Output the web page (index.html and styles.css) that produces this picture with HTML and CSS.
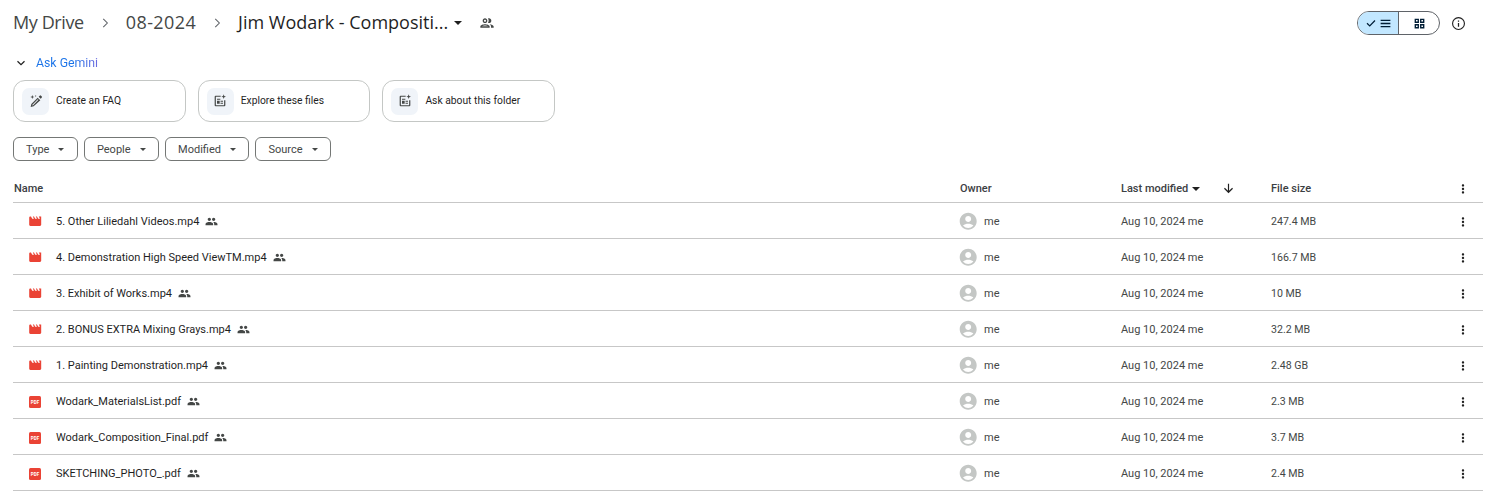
FILE: index.html
```html
<!DOCTYPE html>
<html lang="en">
<head>
<meta charset="utf-8">
<title>Jim Wodark - Composition - Google Drive</title>
<link rel="stylesheet" href="styles.css">
</head>
<body>
<svg class="defs" width="0" height="0" aria-hidden="true">
  <symbol id="movie" viewBox="0 0 24 24"><path d="M18 4l2 4h-3l-2-4h-2l2 4h-3l-2-4H8l2 4H7L5 4H4c-1.1 0-1.99.9-1.99 2L2 18c0 1.1.9 2 2 2h16c1.1 0 2-.9 2-2V4h-4z"/></symbol>
  <symbol id="people" viewBox="0 0 24 24"><path d="M16 11c1.66 0 2.99-1.34 2.99-3S17.66 5 16 5c-1.66 0-3 1.34-3 3s1.34 3 3 3zm-8 0c1.66 0 2.99-1.34 2.99-3S9.66 5 8 5C6.34 5 5 6.34 5 8s1.34 3 3 3zm0 2c-2.33 0-7 1.17-7 3.5V19h14v-2.5c0-2.33-4.67-3.5-7-3.5zm8 0c-.29 0-.62.02-.97.05 1.16.84 1.97 1.97 1.97 3.45V19h6v-2.5c0-2.33-4.67-3.5-7-3.5z"/></symbol>
  <symbol id="avatar" viewBox="0 0 24 24"><path d="M12 2C6.48 2 2 6.48 2 12s4.48 10 10 10 10-4.48 10-10S17.52 2 12 2zm0 4c1.93 0 3.5 1.57 3.5 3.5S13.93 13 12 13s-3.5-1.57-3.5-3.5S10.07 6 12 6zm0 14c-2.03 0-4.43-.82-6.14-2.88C7.55 15.8 9.68 15 12 15s4.45.8 6.14 2.12C16.43 19.18 14.03 20 12 20z"/></symbol>
  <symbol id="kebab" viewBox="0 0 24 24"><path d="M12 8c1.1 0 2-.9 2-2s-.9-2-2-2-2 .9-2 2 .9 2 2 2zm0 2c-1.1 0-2 .9-2 2s.9 2 2 2 2-.9 2-2-.9-2-2-2zm0 6c-1.1 0-2 .9-2 2s.9 2 2 2 2-.9 2-2-.9-2-2-2z"/></symbol>
  <symbol id="docspark" viewBox="0 0 24 24"><path d="M13 4H5.500A1.500 1.500 0 0 0 4 5.500v13A1.500 1.500 0 0 0 5.500 20h13a1.500 1.500 0 0 0 1.500-1.500V11h-1.800v7.200H5.800V5.800H13z"/><path d="M7.500 8.500h5V10h-5zM7.500 11.500h4V16h-4zM12.800 11.500h3.700V13h-3.700zM12.800 14.500h3.700V16h-3.700zM17.500 2l.9 2.600 2.600.9-2.600.9-.9 2.600-.9-2.600-2.600-.9 2.600-.9z"/></symbol>
</svg>

<header class="topbar">
  <nav class="crumbs">
    <span class="crumb crumb-root">My Drive</span>
    <svg class="sep" viewBox="0 0 24 24"><path d="M9 5l7 7-7 7" fill="none" stroke="currentColor" stroke-width="1.800"/></svg>
    <span class="crumb crumb-mid">08-2024</span>
    <svg class="sep" viewBox="0 0 24 24"><path d="M9 5l7 7-7 7" fill="none" stroke="currentColor" stroke-width="1.800"/></svg>
    <span class="crumb current">Jim Wodark - Compositi...</span>
    <span class="caret title-caret"></span>
    <svg class="folder-people" viewBox="0 0 24 24"><path d="M9 13.750c-2.340 0-7 1.170-7 3.500V19h14v-1.750c0-2.330-4.660-3.500-7-3.500zM4.340 17c.84-.58 2.870-1.250 4.660-1.250s3.820.67 4.660 1.250H4.340zM9 12c1.930 0 3.500-1.570 3.500-3.500S10.930 5 9 5 5.500 6.570 5.500 8.500 7.070 12 9 12zm0-5c.83 0 1.500.67 1.500 1.500S9.830 10 9 10s-1.500-.67-1.500-1.500S8.170 7 9 7zm7.040 6.810c1.160.84 1.960 1.960 1.960 3.440V19h4v-1.750c0-2.020-3.500-3.170-5.960-3.440zM15 12c1.930 0 3.500-1.570 3.500-3.500S16.930 5 15 5c-.54 0-1.040.13-1.500.35.630.89 1 1.980 1 3.150s-.37 2.260-1 3.150c.46.22.96.35 1.500.35z"/></svg>
  </nav>
  <div class="view-tools">
    <div class="toggle">
      <span class="seg on">
        <svg class="seg-check" viewBox="0 0 24 24"><path d="M4 12.500l5.500 5.500L20 7" fill="none" stroke="currentColor" stroke-width="2.400"/></svg>
        <svg class="seg-icon" viewBox="0 0 24 24"><path d="M3 5h18v2.400H3zM3 10.800h18v2.400H3zM3 16.600h18V19H3z"/></svg>
      </span>
      <span class="seg">
        <svg class="seg-icon" viewBox="0 0 24 24"><path fill-rule="evenodd" d="M3 3h8v8H3zm2.500 2.500v3h3v-3zM13 3h8v8h-8zm2.500 2.500v3h3v-3zM3 13h8v8H3zm2.500 2.500v3h3v-3zM13 13h8v8h-8zm2.500 2.500v3h3v-3z"/></svg>
      </span>
    </div>
    <svg class="info" viewBox="0 0 24 24"><circle cx="12" cy="12" r="9.500" fill="none" stroke="currentColor" stroke-width="1.800"/><path d="M11 11h2v6h-2zM11 7h2v2h-2z"/></svg>
  </div>
</header>

<section class="gemini">
  <div class="gemini-head">
    <svg class="chev" viewBox="0 0 24 24"><path d="M5 8.500l7 7 7-7" fill="none" stroke="currentColor" stroke-width="2.400"/></svg>
    <span class="gemini-label">Ask Gemini</span>
  </div>
  <div class="prompts">
    <div class="prompt">
      <span class="prompt-icon"><svg viewBox="0 0 24 24"><path d="M8.500 20L4 21l1-4.500L14.500 7l4 4zM6.800 17.300l-.4 1.300 1.300-.3 8-8-1-1z" fill-rule="evenodd"/><path d="M16 5.500l1.500-1.500a1.400 1.400 0 0 1 2 0l1 1a1.400 1.400 0 0 1 0 2L19 8.500zM6.500 3l.8 2.200 2.200.8-2.200.8L6.500 9l-.8-2.200L3.500 6l2.200-.8zM11.500 3l.4 1.100 1.100.4-1.100.4-.4 1.100-.4-1.100-1.100-.4 1.100-.4z"/></svg></span>
      <span class="prompt-label">Create an FAQ</span>
    </div>
    <div class="prompt">
      <span class="prompt-icon"><svg viewBox="0 0 24 24"><use href="#docspark"/></svg></span>
      <span class="prompt-label">Explore these files</span>
    </div>
    <div class="prompt">
      <span class="prompt-icon"><svg viewBox="0 0 24 24"><use href="#docspark"/></svg></span>
      <span class="prompt-label">Ask about this folder</span>
    </div>
  </div>
</section>

<div class="filters">
  <button class="filter">Type<span class="caret"></span></button>
  <button class="filter">People<span class="caret"></span></button>
  <button class="filter">Modified<span class="caret"></span></button>
  <button class="filter">Source<span class="caret"></span></button>
</div>

<main class="table">
  <div class="row head">
    <div>Name</div>
    <div>Owner</div>
    <div class="mod-head"><span>Last modified</span><span class="caret dark"></span><svg class="arrow" viewBox="0 0 24 24"><path d="M12 3v16M4.500 11.500L12 19l7.500-7.500" fill="none" stroke="currentColor" stroke-width="2.200"/></svg></div>
    <div>File size</div>
    <svg class="kebab"><use href="#kebab"/></svg>
  </div>

  <div class="row">
    <div class="name"><svg class="ftype"><use href="#movie"/></svg><span>5. Other Liliedahl Videos.mp4</span><svg class="shared"><use href="#people"/></svg></div>
    <div class="owner"><svg class="avatar"><use href="#avatar"/></svg><span>me</span></div>
    <div>Aug 10, 2024 me</div><div class="size">247.4 MB</div><svg class="kebab"><use href="#kebab"/></svg>
  </div>
  <div class="row">
    <div class="name"><svg class="ftype"><use href="#movie"/></svg><span>4. Demonstration High Speed ViewTM.mp4</span><svg class="shared"><use href="#people"/></svg></div>
    <div class="owner"><svg class="avatar"><use href="#avatar"/></svg><span>me</span></div>
    <div>Aug 10, 2024 me</div><div class="size">166.7 MB</div><svg class="kebab"><use href="#kebab"/></svg>
  </div>
  <div class="row">
    <div class="name"><svg class="ftype"><use href="#movie"/></svg><span>3. Exhibit of Works.mp4</span><svg class="shared"><use href="#people"/></svg></div>
    <div class="owner"><svg class="avatar"><use href="#avatar"/></svg><span>me</span></div>
    <div>Aug 10, 2024 me</div><div class="size">10 MB</div><svg class="kebab"><use href="#kebab"/></svg>
  </div>
  <div class="row">
    <div class="name"><svg class="ftype"><use href="#movie"/></svg><span>2. BONUS EXTRA Mixing Grays.mp4</span><svg class="shared"><use href="#people"/></svg></div>
    <div class="owner"><svg class="avatar"><use href="#avatar"/></svg><span>me</span></div>
    <div>Aug 10, 2024 me</div><div class="size">32.2 MB</div><svg class="kebab"><use href="#kebab"/></svg>
  </div>
  <div class="row">
    <div class="name"><svg class="ftype"><use href="#movie"/></svg><span>1. Painting Demonstration.mp4</span><svg class="shared"><use href="#people"/></svg></div>
    <div class="owner"><svg class="avatar"><use href="#avatar"/></svg><span>me</span></div>
    <div>Aug 10, 2024 me</div><div class="size">2.48 GB</div><svg class="kebab"><use href="#kebab"/></svg>
  </div>
  <div class="row">
    <div class="name"><svg class="pdf" viewBox="0 0 12 12"><rect width="12" height="12" rx="1.500"/><text x="6" y="7.900" text-anchor="middle">PDF</text></svg><span>Wodark_MaterialsList.pdf</span><svg class="shared"><use href="#people"/></svg></div>
    <div class="owner"><svg class="avatar"><use href="#avatar"/></svg><span>me</span></div>
    <div>Aug 10, 2024 me</div><div class="size">2.3 MB</div><svg class="kebab"><use href="#kebab"/></svg>
  </div>
  <div class="row">
    <div class="name"><svg class="pdf" viewBox="0 0 12 12"><rect width="12" height="12" rx="1.500"/><text x="6" y="7.900" text-anchor="middle">PDF</text></svg><span>Wodark_Composition_Final.pdf</span><svg class="shared"><use href="#people"/></svg></div>
    <div class="owner"><svg class="avatar"><use href="#avatar"/></svg><span>me</span></div>
    <div>Aug 10, 2024 me</div><div class="size">3.7 MB</div><svg class="kebab"><use href="#kebab"/></svg>
  </div>
  <div class="row">
    <div class="name"><svg class="pdf" viewBox="0 0 12 12"><rect width="12" height="12" rx="1.500"/><text x="6" y="7.900" text-anchor="middle">PDF</text></svg><span>SKETCHING_PHOTO_.pdf</span><svg class="shared"><use href="#people"/></svg></div>
    <div class="owner"><svg class="avatar"><use href="#avatar"/></svg><span>me</span></div>
    <div>Aug 10, 2024 me</div><div class="size">2.4 MB</div><svg class="kebab"><use href="#kebab"/></svg>
  </div>
</main>
</body>
</html>
```

FILE: styles.css
```css
* { box-sizing: border-box; }
html, body { margin: 0; height: 100%; }
body {
  background: #fff;
  color: #1f1f1f;
  font-family: Roboto, "Liberation Sans", sans-serif;
  font-size: 11px;
  overflow: hidden;
}
svg { display: block; fill: currentColor; flex: none; }
.defs { position: absolute; }

.topbar {
  display: flex;
  align-items: center;
  justify-content: space-between;
  height: 46px;
  padding: 0 25px 0 13px;
}
.crumbs { display: flex; align-items: center; }
.crumb {
  margin-bottom: 2px;
  font-family: "Open Sans", Roboto, sans-serif;
  font-size: 18px;
  color: #444746;
  white-space: nowrap;
}
.crumb.current { color: #1f1f1f; }
.crumb-root { letter-spacing: -0.4px; }
.crumb-mid { letter-spacing: 0.4px; }
.sep { width: 14px; height: 14px; margin: 0 14px; color: #5f6368; }
.caret {
  display: inline-block;
  width: 0;
  height: 0;
  border-left: 3.500px solid transparent;
  border-right: 3.500px solid transparent;
  border-top: 3.500px solid currentColor;
}
.title-caret { margin-left: 6px; color: #1f1f1f; border-width: 4px 4px 0; }
.folder-people { width: 16px; height: 16px; margin-left: 17px; color: #444746; }

.view-tools { display: flex; align-items: center; gap: 11px; }
.toggle {
  display: flex;
  width: 83px;
  height: 24px;
  border: 1px solid #5f6368;
  border-radius: 12px;
  overflow: hidden;
  color: #001d35;
}
.seg { flex: 1; display: flex; align-items: center; justify-content: center; gap: 2px; }
.seg.on { flex: none; width: 41px; background: #c2e7ff; border-right: 1px solid #5f6368; }
.seg-check { width: 12px; height: 12px; }
.seg-icon { width: 13px; height: 13px; }
.info { width: 15px; height: 15px; color: #1f1f1f; }

.gemini { padding: 0 13px; }
.gemini-head { display: flex; align-items: center; height: 34px; }
.chev { width: 12px; height: 12px; margin-left: 2px; color: #1f1f1f; }
.gemini-label {
  margin-left: 9px;
  font-size: 12.300px;
  background: linear-gradient(90deg, #1a73e8 0%, #1a73e8 60%, #6f6ce0 100%);
  -webkit-background-clip: text;
  background-clip: text;
  color: transparent;
}
.prompts { display: flex; gap: 12px; }
.prompt {
  display: flex;
  align-items: center;
  gap: 7px;
  width: 172.700px;
  height: 42px;
  padding-left: 8px;
  border: 1px solid #c4c7c5;
  border-radius: 12px;
  font-size: 10.300px;
}
.prompt-label { margin-bottom: 2px; }
.prompt-icon {
  display: flex;
  align-items: center;
  justify-content: center;
  width: 27px;
  height: 27px;
  border-radius: 7px;
  background: #f0f4f9;
  color: #444746;
}
.prompt-icon svg { width: 16px; height: 16px; }

.filters { display: flex; gap: 6px; padding: 15px 13px 0; }
.filter {
  display: flex;
  align-items: center;
  justify-content: space-between;
  height: 24px;
  padding: 0 12.500px 0 12px;
  background: #fff;
  border: 1px solid #747775;
  border-radius: 6px;
  font: 11px Roboto, sans-serif;
  color: #444746;
  gap: 9px;
}

.table { margin: 13px 8px 0 13px; }
.row {
  display: grid;
  grid-template-columns: 947px 161px 150px 1fr 14px;
  align-items: center;
  height: 36px;
  border-bottom: 1px solid #c7c7c7;
  color: #444746;
  padding: 2px 13px 0 0;
}
.row.head { height: 29px; color: #3c4043; font-weight: 500; padding-top: 1px; }
.row.head > div:first-child { padding-left: 1px; }
.name { display: flex; align-items: center; color: #1f1f1f; padding-left: 16px; }
.ftype { width: 14.400px; height: 14.400px; margin: 0 14px 0 -1.400px; color: #ea4335; }
.pdf { width: 12px; height: 12px; margin-right: 15px; }
.pdf rect { fill: #ea4335; }
.pdf text { fill: #fff; font: 700 4.500px Roboto, sans-serif; }
.shared { width: 13px; height: 13px; margin-left: 6px; color: #444746; }
.owner { display: flex; align-items: center; gap: 5.600px; }
.avatar { width: 20.400px; height: 20.400px; margin-left: -2px; color: #c4c7c5; }
.size { font-size: 10.600px; }
.mod-head { display: flex; align-items: center; gap: 4px; }
.mod-head .caret { color: #1f1f1f; border-width: 4px 4px 0; }
.arrow { width: 13px; height: 13px; margin-left: 18px; color: #1f1f1f; }
.kebab { width: 14px; height: 14px; color: #1f1f1f; }
```
